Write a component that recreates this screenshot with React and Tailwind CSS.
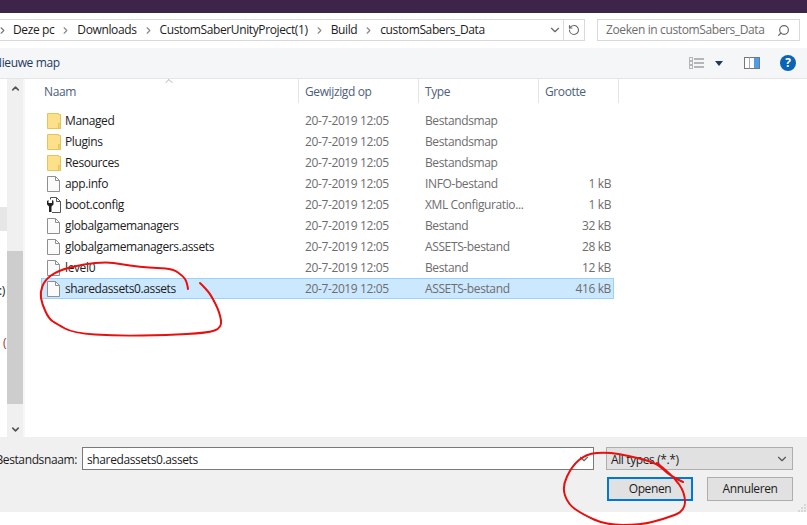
import React from 'react';
import { ChevronRight, ChevronDown, ChevronUp, RotateCw, Search } from 'lucide-react';

const files = [
  { name: 'Managed', type: 'Bestandsmap', size: '', icon: 'folder' },
  { name: 'Plugins', type: 'Bestandsmap', size: '', icon: 'folder' },
  { name: 'Resources', type: 'Bestandsmap', size: '', icon: 'folder' },
  { name: 'app.info', type: 'INFO-bestand', size: '1 kB', icon: 'file' },
  { name: 'boot.config', type: 'XML Configuratio...', size: '1 kB', icon: 'config' },
  { name: 'globalgamemanagers', type: 'Bestand', size: '32 kB', icon: 'file' },
  { name: 'globalgamemanagers.assets', type: 'ASSETS-bestand', size: '28 kB', icon: 'file' },
  { name: 'level0', type: 'Bestand', size: '12 kB', icon: 'file' },
  { name: 'sharedassets0.assets', type: 'ASSETS-bestand', size: '416 kB', icon: 'file', selected: true },
];

const crumbs = ['Deze pc', 'Downloads', 'CustomSaberUnityProject(1)', 'Build', 'customSabers_Data'];

const FolderIcon = () => (
  <svg width="14" height="16" viewBox="0 0 14 16" className="shrink-0">
    <path d="M0.5 0.5H11.5V1.5H13.5V15.5H0.5Z" fill="#fde08a" stroke="#e8c25a" />
    <path d="M11.5 10.5V15.5H13.5V10.5Z" fill="#f7d26b" stroke="#e8c25a" />
  </svg>
);

const FileIcon = () => (
  <svg width="14" height="16" viewBox="0 0 14 16" className="shrink-0">
    <path d="M0.5 0.5H8.5L12.5 4.5V15.5H0.5Z" fill="#fbfbfb" stroke="#8f8f8f" />
    <path d="M8.5 0.5V4.5H12.5" fill="none" stroke="#8f8f8f" />
  </svg>
);

const ConfigIcon = () => (
  <svg width="14" height="16" viewBox="0 0 14 16" className="shrink-0">
    <path d="M3.5 2.5V0.5H9.5L13.5 4.5V15.5H5" fill="#fff" stroke="#555" />
    <path d="M9.5 0.5V4.5H13.5" fill="none" stroke="#555" />
    <path d="M0 4V7.5L2 9.5V15H4.5V9.5L6.5 7.5V4L5 3V6H1.5V3Z" fill="#222" />
  </svg>
);

const smooth = (pts) => {
  let d = `M${pts[0][0]} ${pts[0][1]}`;
  for (let i = 1; i < pts.length - 1; i++) {
    const mx = (pts[i][0] + pts[i + 1][0]) / 2;
    const my = (pts[i][1] + pts[i + 1][1]) / 2;
    d += ` Q${pts[i][0]} ${pts[i][1]} ${mx} ${my}`;
  }
  const last = pts[pts.length - 1];
  return `${d} L${last[0]} ${last[1]}`;
};

const firstCircle = [[188, 289], [187, 282], [183, 276], [173, 269], [158, 268], [140, 267], [120, 264], [107, 262], [83, 264], [57, 271], [45, 280], [40, 292], [42, 304], [49, 319], [57, 324], [73, 333], [117, 336], [167, 335], [207, 333], [222, 328], [220, 313], [211, 295], [205, 288], [200, 283]];
const secondCircle = [[683, 482], [670, 476], [657, 463], [630, 456], [607, 452], [586, 454], [572, 466], [562, 487], [568, 504], [582, 514], [606, 525], [640, 525], [664, 519], [685, 511], [685, 493], [674, 477], [657, 463]];

const Row = ({ file }) => (
  <div className={`flex items-center h-[21px] w-[573px] ${file.selected ? 'bg-[#cce8ff] border border-[#99d1ff]' : 'border border-transparent'}`}>
    <div className="w-[263px] flex items-center pl-[5px] gap-[4px] shrink-0">
      <span className="w-[14px] flex justify-center shrink-0">
        {file.icon === 'folder' && <FolderIcon />}
        {file.icon === 'file' && <FileIcon />}
        {file.icon === 'config' && <ConfigIcon />}
      </span>
      <span className="text-[#1c1c1c]">{file.name}</span>
    </div>
    <div className="w-[120px] shrink-0 text-[#6d6d6d]">20-7-2019 12:05</div>
    <div className="w-[110px] shrink-0 text-[#6d6d6d]">{file.type}</div>
    <div className="w-[76px] shrink-0 text-right text-[#6d6d6d]">{file.size}</div>
  </div>
);

export default function App() {
  return (
    <div className="relative w-[807px] h-[525px] overflow-hidden bg-white flex flex-col text-[12px] font-['Open_Sans',sans-serif] tracking-[-0.38px]">
      <div className="h-[13px] bg-[#3d2549] shrink-0"></div>

      {/* address + search */}
      <div className="h-[35px] shrink-0 flex items-start pt-[6px]">
        <div className="w-[585px] h-[22px] border border-l-0 border-[#d9d9d9] flex items-center overflow-hidden">
          <ChevronRight size={11} strokeWidth={2.5} className="text-[#777] ml-[-3px] mr-[5px] shrink-0" />
          {crumbs.map((c, i) => (
            <React.Fragment key={c}>
              <span className="text-[#1c1c1c] whitespace-nowrap">{c}</span>
              {i < crumbs.length - 1 && <ChevronRight size={11} strokeWidth={2.5} className="text-[#888] mx-[6px] shrink-0" />}
            </React.Fragment>
          ))}
          <div className="ml-auto flex items-center h-full">
            <ChevronDown size={14} className="text-[#666] mr-[1px]" />
            <div className="w-[21px] h-full border-l border-[#d9d9d9] flex items-center justify-center">
              <RotateCw size={12} strokeWidth={2.2} className="text-[#666] -scale-x-100" />
            </div>
          </div>
        </div>
        <div className="ml-[12px] w-[203px] h-[22px] border border-[#d9d9d9] flex items-center pl-[8px] pr-[9px] justify-between">
          <span className="text-[#6d6d6d] whitespace-nowrap">Zoeken in customSabers_Data</span>
          <Search size={13} strokeWidth={2.2} className="text-[#666] -scale-x-100" />
        </div>
      </div>

      {/* toolbar */}
      <div className="h-[31px] shrink-0 bg-[#f5f6f7] border-b border-[#e5e5e5] flex items-center overflow-hidden">
        <span className="ml-[-7px] text-[#1f3a5f] whitespace-nowrap">Nieuwe map</span>
        <div className="ml-auto flex items-center pr-[11px]">
          <svg width="16" height="13" viewBox="0 0 16 13">
            <path d="M0.5 0.5H3.5V3.5H0.5ZM0.5 4.5H3.5V7.5H0.5ZM0.5 8.5H3.5V11.5H0.5Z" fill="none" stroke="#777" strokeDasharray="1 1" />
            <path d="M5 2H15M5 6H15M5 10H15" stroke="#777" />
          </svg>
          <svg width="8" height="5" viewBox="0 0 8 5" className="ml-[10px]">
            <path d="M0 0H8L4 5Z" fill="#1f3a5f" />
          </svg>
          <svg width="16" height="12" viewBox="0 0 16 12" className="ml-[21px]">
            <rect x="0.5" y="0.5" width="15" height="11" fill="#fff" stroke="#777" />
            <path d="M5.5 0.5V11.5" stroke="#aaa" />
            <rect x="10" y="1" width="5" height="10" fill="#4a9fe8" />
          </svg>
          <span className="ml-[20px] w-[16px] h-[16px] rounded-full bg-[#0b63b5] flex items-center justify-center text-white font-bold text-[12px]">?</span>
        </div>
      </div>

      {/* main */}
      <div className="h-[358px] shrink-0 flex">
        <div className="w-[7px] shrink-0 flex flex-col overflow-hidden">
          <div className="h-[128px] shrink-0"></div>
          <div className="h-[24px] shrink-0 bg-[#e6e6e6]"></div>
          <div className="h-[52px] mt-[52px] shrink-0 leading-[16px] ml-[-1px] text-[#1c1c1c]">:)</div>
          <div className="ml-[3px] leading-[16px] text-[#a03030]">(</div>
        </div>
        <div className="w-[16px] shrink-0 bg-[#f0f0f0] flex flex-col items-center">
          <div className="h-[19px] shrink-0 flex items-center justify-center">
            <ChevronUp size={11} strokeWidth={3.5} className="text-[#555]" />
          </div>
          <div className="w-full h-[153px] mt-[153px] bg-[#cdcdcd] shrink-0"></div>
          <div className="mt-auto h-[16px] shrink-0 flex items-center justify-center">
            <ChevronDown size={11} strokeWidth={3.5} className="text-[#555]" />
          </div>
        </div>
        <div className="w-[2px] shrink-0 bg-[#f7f7f7]"></div>
        <div className="flex-1 min-w-0 relative pl-[16px]">
          <ChevronUp size={12} strokeWidth={1.2} className="absolute left-[138px] top-[-4px] text-[#777]" />
          <div className="h-[24px] flex text-[#4c607a]">
            <div className="w-[258px] shrink-0 border-r border-[#e5e5e5] pl-[3px] pt-[1px] flex items-center">Naam</div>
            <div className="w-[120px] shrink-0 border-r border-[#e5e5e5] pl-[6px] pt-[1px] flex items-center">Gewijzigd op</div>
            <div className="w-[120px] shrink-0 border-r border-[#e5e5e5] pl-[6px] pt-[1px] flex items-center">Type</div>
            <div className="w-[80px] shrink-0 border-r border-[#e5e5e5] pl-[6px] pt-[1px] flex items-center">Grootte</div>
          </div>
          <div className="mt-[7px] flex flex-col">
            {files.map((f) => <Row key={f.name} file={f} />)}
          </div>
        </div>
      </div>

      {/* footer */}
      <div className="relative h-[75px] shrink-0 bg-[#f0f0f0] pt-[10px]">
        <div className="flex items-center h-[23px]">
          <div className="w-[77px] flex justify-end overflow-hidden shrink-0 text-[#1c1c1c] whitespace-nowrap pt-[2px]">Bestandsnaam:</div>
          <div className="ml-[5px] w-[512px] h-[23px] bg-white border border-[#7a7a7a] flex items-center pl-[4px] justify-between pr-[2px]">
            <span className="text-[#1c1c1c] pt-[2px]">sharedassets0.assets</span>
            <ChevronDown size={14} className="text-[#666]" />
          </div>
          <div className="ml-[12px] w-[187px] h-[23px] bg-[#e1e1e1] border border-[#adadad] flex items-center pl-[4px] pr-[3px] justify-between">
            <span className="text-[#1c1c1c] pt-[2px]">All types (*.*)</span>
            <ChevronDown size={14} className="text-[#555]" />
          </div>
        </div>
        <div className="flex justify-end mt-[7px] pr-[14px] gap-[14px]">
          <div className="w-[86px] h-[24px] bg-[#e1e1e1] border-2 border-[#0078d7] flex items-center justify-center text-[#1c1c1c]">Openen</div>
          <div className="w-[86px] h-[24px] bg-[#e1e1e1] border border-[#adadad] flex items-center justify-center text-[#1c1c1c]">Annuleren</div>
        </div>
        <svg width="12" height="8" viewBox="0 0 12 8" className="absolute right-0 bottom-0">
          <path d="M9 1H11M6 4H8M9 4H11M3 7H5M6 7H8M9 7H11" stroke="#bdbdbd" strokeDasharray="2 1" />
        </svg>
      </div>

      {/* hand drawn red circles */}
      <svg width="807" height="525" viewBox="0 0 807 525" className="absolute left-0 top-0 pointer-events-none" fill="none" stroke="#e8100e" strokeWidth="2" strokeLinecap="round" strokeLinejoin="round">
        <path d={smooth(firstCircle)} />
        <path d={smooth(secondCircle)} />
      </svg>
    </div>
  );
}
